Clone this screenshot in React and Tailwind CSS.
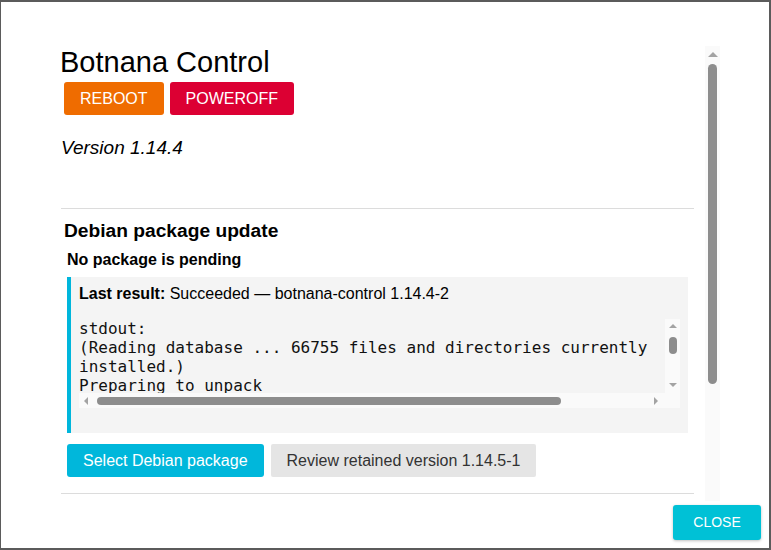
import React from 'react';

const sans = { fontFamily: '"Liberation Sans", Arial, sans-serif' };

const logLines = [
  'stdout:',
  '(Reading database ... 66755 files and directories currently',
  'installed.)',
  'Preparing to unpack',
];

// classic scrollbar arrows, drawn with css triangles
const ArrowUp = () => (
  <div className="w-0 h-0 border-x-[4px] border-x-transparent border-b-[4px] border-b-[#a3a3a3]" />
);
const ArrowDown = () => (
  <div className="w-0 h-0 border-x-[4px] border-x-transparent border-t-[4px] border-t-[#a3a3a3]" />
);
const ArrowLeft = () => (
  <div className="w-0 h-0 border-y-[4px] border-y-transparent border-r-[4px] border-r-[#a3a3a3]" />
);
const ArrowRight = () => (
  <div className="w-0 h-0 border-y-[4px] border-y-transparent border-l-[4px] border-l-[#a3a3a3]" />
);

const LogView = () => (
  <div className="mt-[16px] h-[89px] grid grid-cols-[1fr_15px] grid-rows-[74px_15px]">
    <pre
      className="overflow-hidden whitespace-pre text-[16px] leading-[19px] text-[#111]"
      style={{ fontFamily: '"DejaVu Sans Mono", monospace' }}
    >
      {logLines.join('\n')}
    </pre>
    <div className="bg-[#fafafa] flex flex-col items-center">
      <div className="mt-[5px]"><ArrowUp /></div>
      <div className="mt-[9px] w-[8px] h-[17px] rounded-full bg-[#8d8d8d]" />
      <div className="mt-auto mb-[6px]"><ArrowDown /></div>
    </div>
    <div className="bg-[#fafafa] flex items-center">
      <div className="ml-[5px]"><ArrowLeft /></div>
      <div className="ml-[9px] w-[464px] h-[8px] rounded-full bg-[#8d8d8d]" />
      <div className="ml-auto mr-[7px]"><ArrowRight /></div>
    </div>
    <div className="bg-[#fafafa]" />
  </div>
);

const App = () => {
  return (
    <div className="w-full h-[550px] bg-[#5b5b5b] pt-[2px] pl-[1px] pr-[2px] pb-[2px]" style={sans}>
      <div className="h-full bg-white flex flex-col text-black">
        <div className="mt-[44px] ml-[60px] mr-[49px] h-[455px] flex">
          <div className="flex-1 overflow-hidden pr-[11px]">
            <h1 className="-ml-[1px] text-[29px] leading-[33px] font-normal">Botnana Control</h1>
            <div className="mt-[3px] ml-[3px] flex gap-[6px]">
              <button className="h-[33px] px-4 rounded-[3px] bg-[#ef6c00] text-white text-[16px] uppercase">Reboot</button>
              <button className="h-[33px] px-4 rounded-[3px] bg-[#dc0033] text-white text-[16px] uppercase">Poweroff</button>
            </div>
            <p className="mt-[22px] text-[19px] leading-[22px] italic">Version 1.14.4</p>
            <hr className="mt-[49px] border-t border-[#dcdcdc]" />

            <section className="ml-[3px]">
              <h2 className="mt-[11px] text-[19.2px] leading-[22px] font-bold">Debian package update</h2>
              <div className="ml-[3px] mr-[6px]">
                <p className="mt-[8px] text-[16px] leading-[19px] font-bold">No package is pending</p>
                <div className="mt-[8px] bg-[#f4f4f4] border-l-4 border-[#00b6dc] pl-2 pr-2 pt-[7px] pb-[25px]">
                  <p className="text-[16px] leading-[19px]">
                    <span className="font-bold">Last result:</span> Succeeded — botnana-control 1.14.4-2
                  </p>
                  <LogView />
                </div>
                <div className="mt-[11px] flex gap-[7px]">
                  <button className="h-[33px] px-4 rounded-[3px] bg-[#00b7db] text-white text-[16px]">Select Debian package</button>
                  <button className="h-[33px] px-4 rounded-[2px] bg-[#e5e5e5] text-[#333] text-[16px]">Review retained version 1.14.5-1</button>
                </div>
              </div>
            </section>
            <hr className="mt-[16px] border-t border-[#dcdcdc]" />
          </div>

          {/* page scrollbar */}
          <div className="w-[15px] bg-[#fafafa] flex flex-col items-center">
            <div className="mt-[6px] w-0 h-0 border-x-[5px] border-x-transparent border-b-[5px] border-b-[#a3a3a3]" />
            <div className="mt-[7px] w-[9px] h-[320px] rounded-full bg-[#8d8d8d]" />
          </div>
        </div>

        <div className="mt-[4px] flex justify-end pr-[8px]">
          <button className="h-[35px] w-[88px] rounded-[3px] bg-[#00c1d6] text-white text-[14px] uppercase shadow-[0_1px_3px_rgba(0,0,0,0.25)]">
            Close
          </button>
        </div>
      </div>
    </div>
  );
};

export default App;
